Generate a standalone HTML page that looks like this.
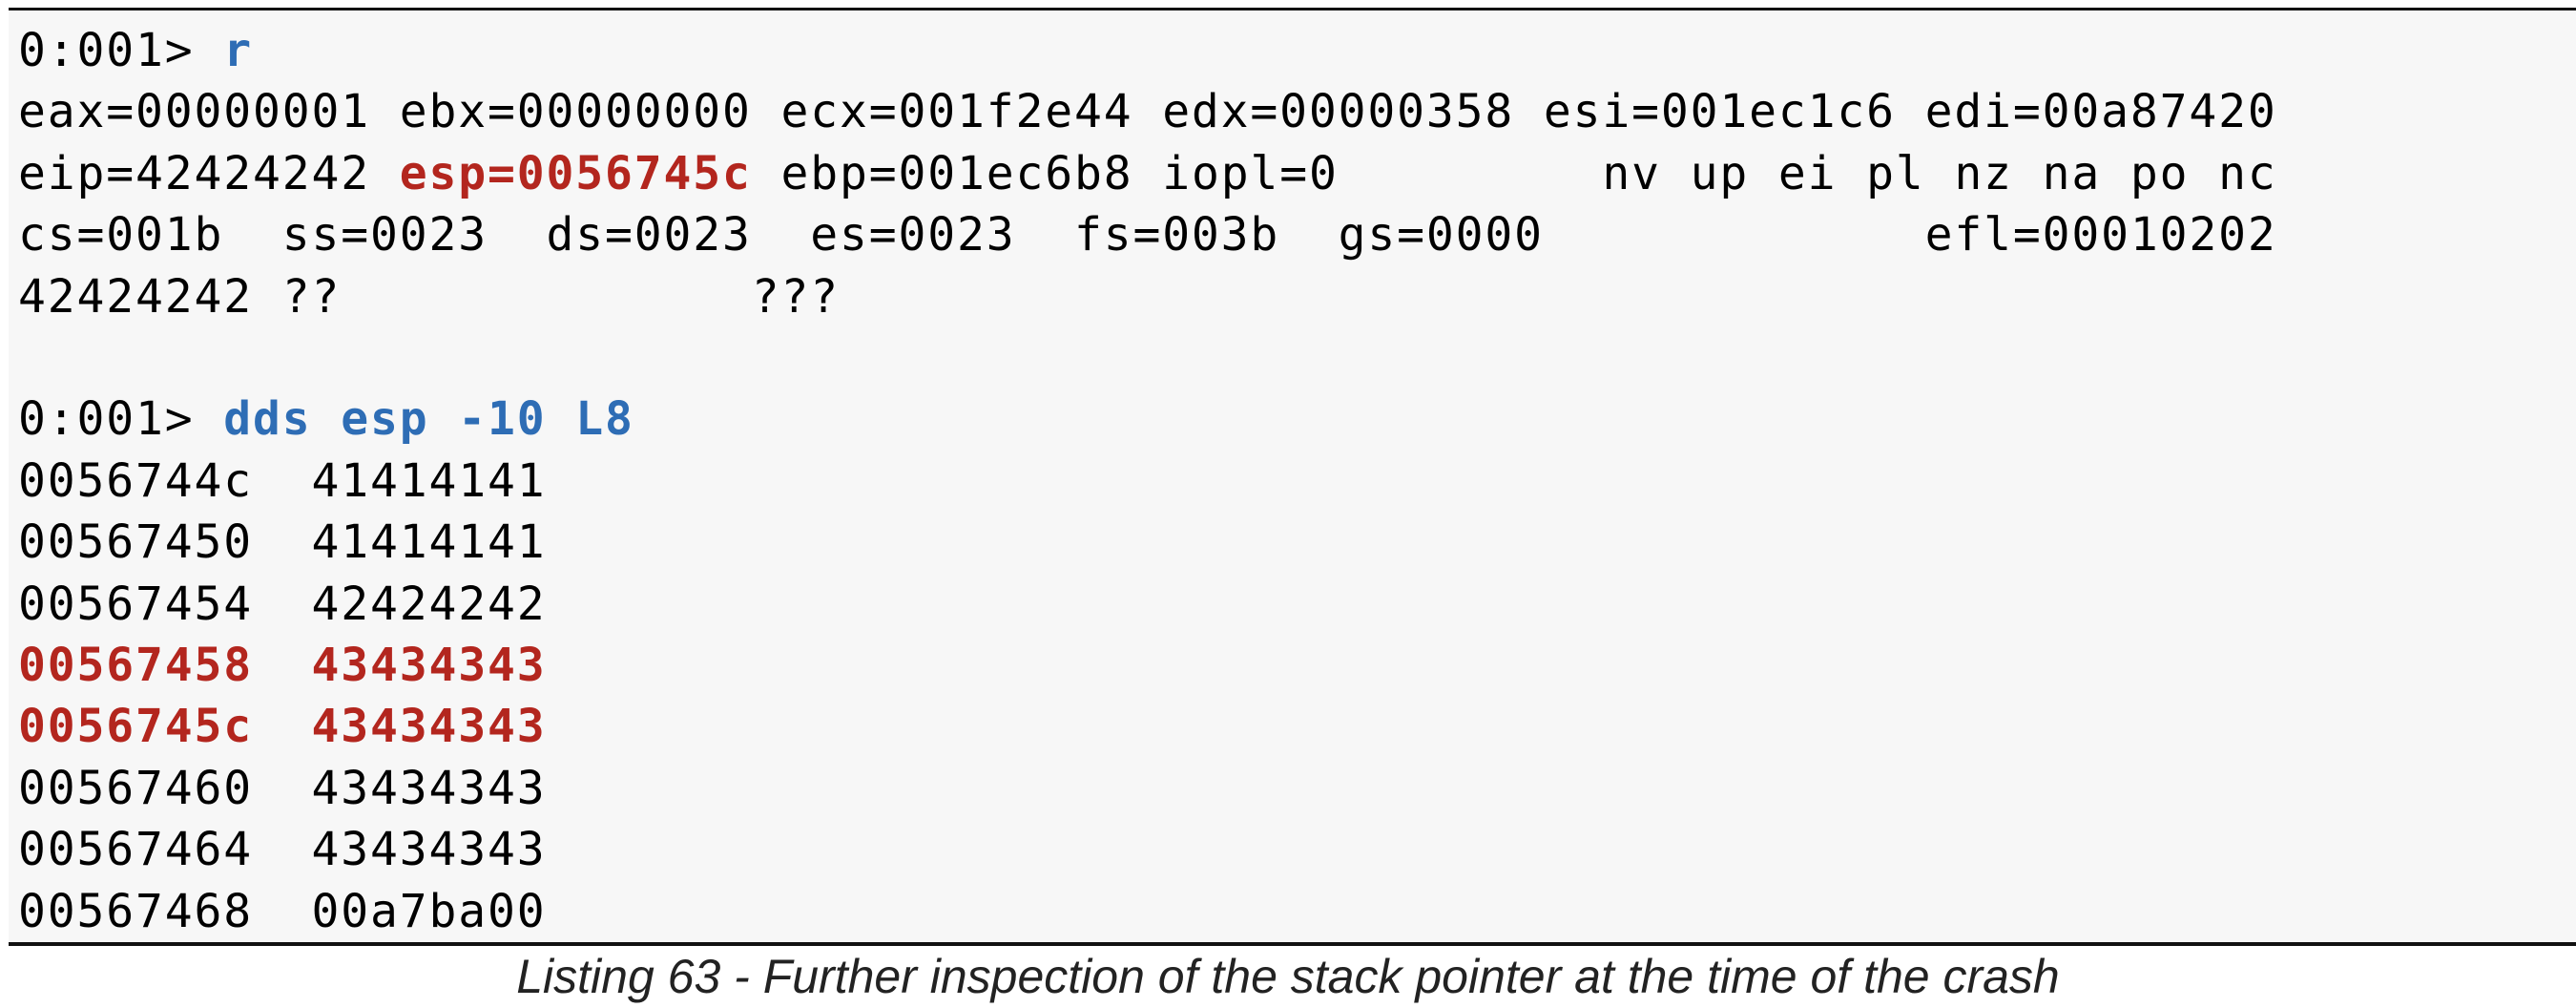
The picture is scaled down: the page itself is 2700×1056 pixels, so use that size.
<!DOCTYPE html>
<html><head><meta charset="utf-8"><style>
html,body{margin:0;padding:0;background:#fff;width:2700px;height:1056px;overflow:hidden}
.box{position:absolute;left:9px;top:8px;width:2691px;height:983px;background:#f7f7f7;border-top:3px solid #111;border-bottom:4px solid #111;box-sizing:border-box}
pre{position:absolute;left:19px;top:21px;margin:0;font-family:"DejaVu Sans Mono","Liberation Mono",monospace;font-size:48px;line-height:64.4px;letter-spacing:1.85px;color:#000}
.b{color:#2e6db5;font-weight:bold}
.r{color:#b3261e;font-weight:bold}
.cap{position:absolute;left:0;width:2700px;top:994px;text-align:center;font-family:"Liberation Sans",sans-serif;font-style:italic;font-size:50px;color:#222}
</style></head><body>
<div class="box"></div>
<pre>0:001&gt; <span class="b">r</span>
eax=00000001 ebx=00000000 ecx=001f2e44 edx=00000358 esi=001ec1c6 edi=00a87420
eip=42424242 <span class="r">esp=0056745c</span> ebp=001ec6b8 iopl=0         nv up ei pl nz na po nc
cs=001b  ss=0023  ds=0023  es=0023  fs=003b  gs=0000             efl=00010202
42424242 ??              ???

0:001&gt; <span class="b">dds esp -10 L8</span>
0056744c  41414141
00567450  41414141
00567454  42424242
<span class="r">00567458  43434343</span>
<span class="r">0056745c  43434343</span>
00567460  43434343
00567464  43434343
00567468  00a7ba00</pre>
<div class="cap">Listing 63 - Further inspection of the stack pointer at the time of the crash</div>
</body></html>
